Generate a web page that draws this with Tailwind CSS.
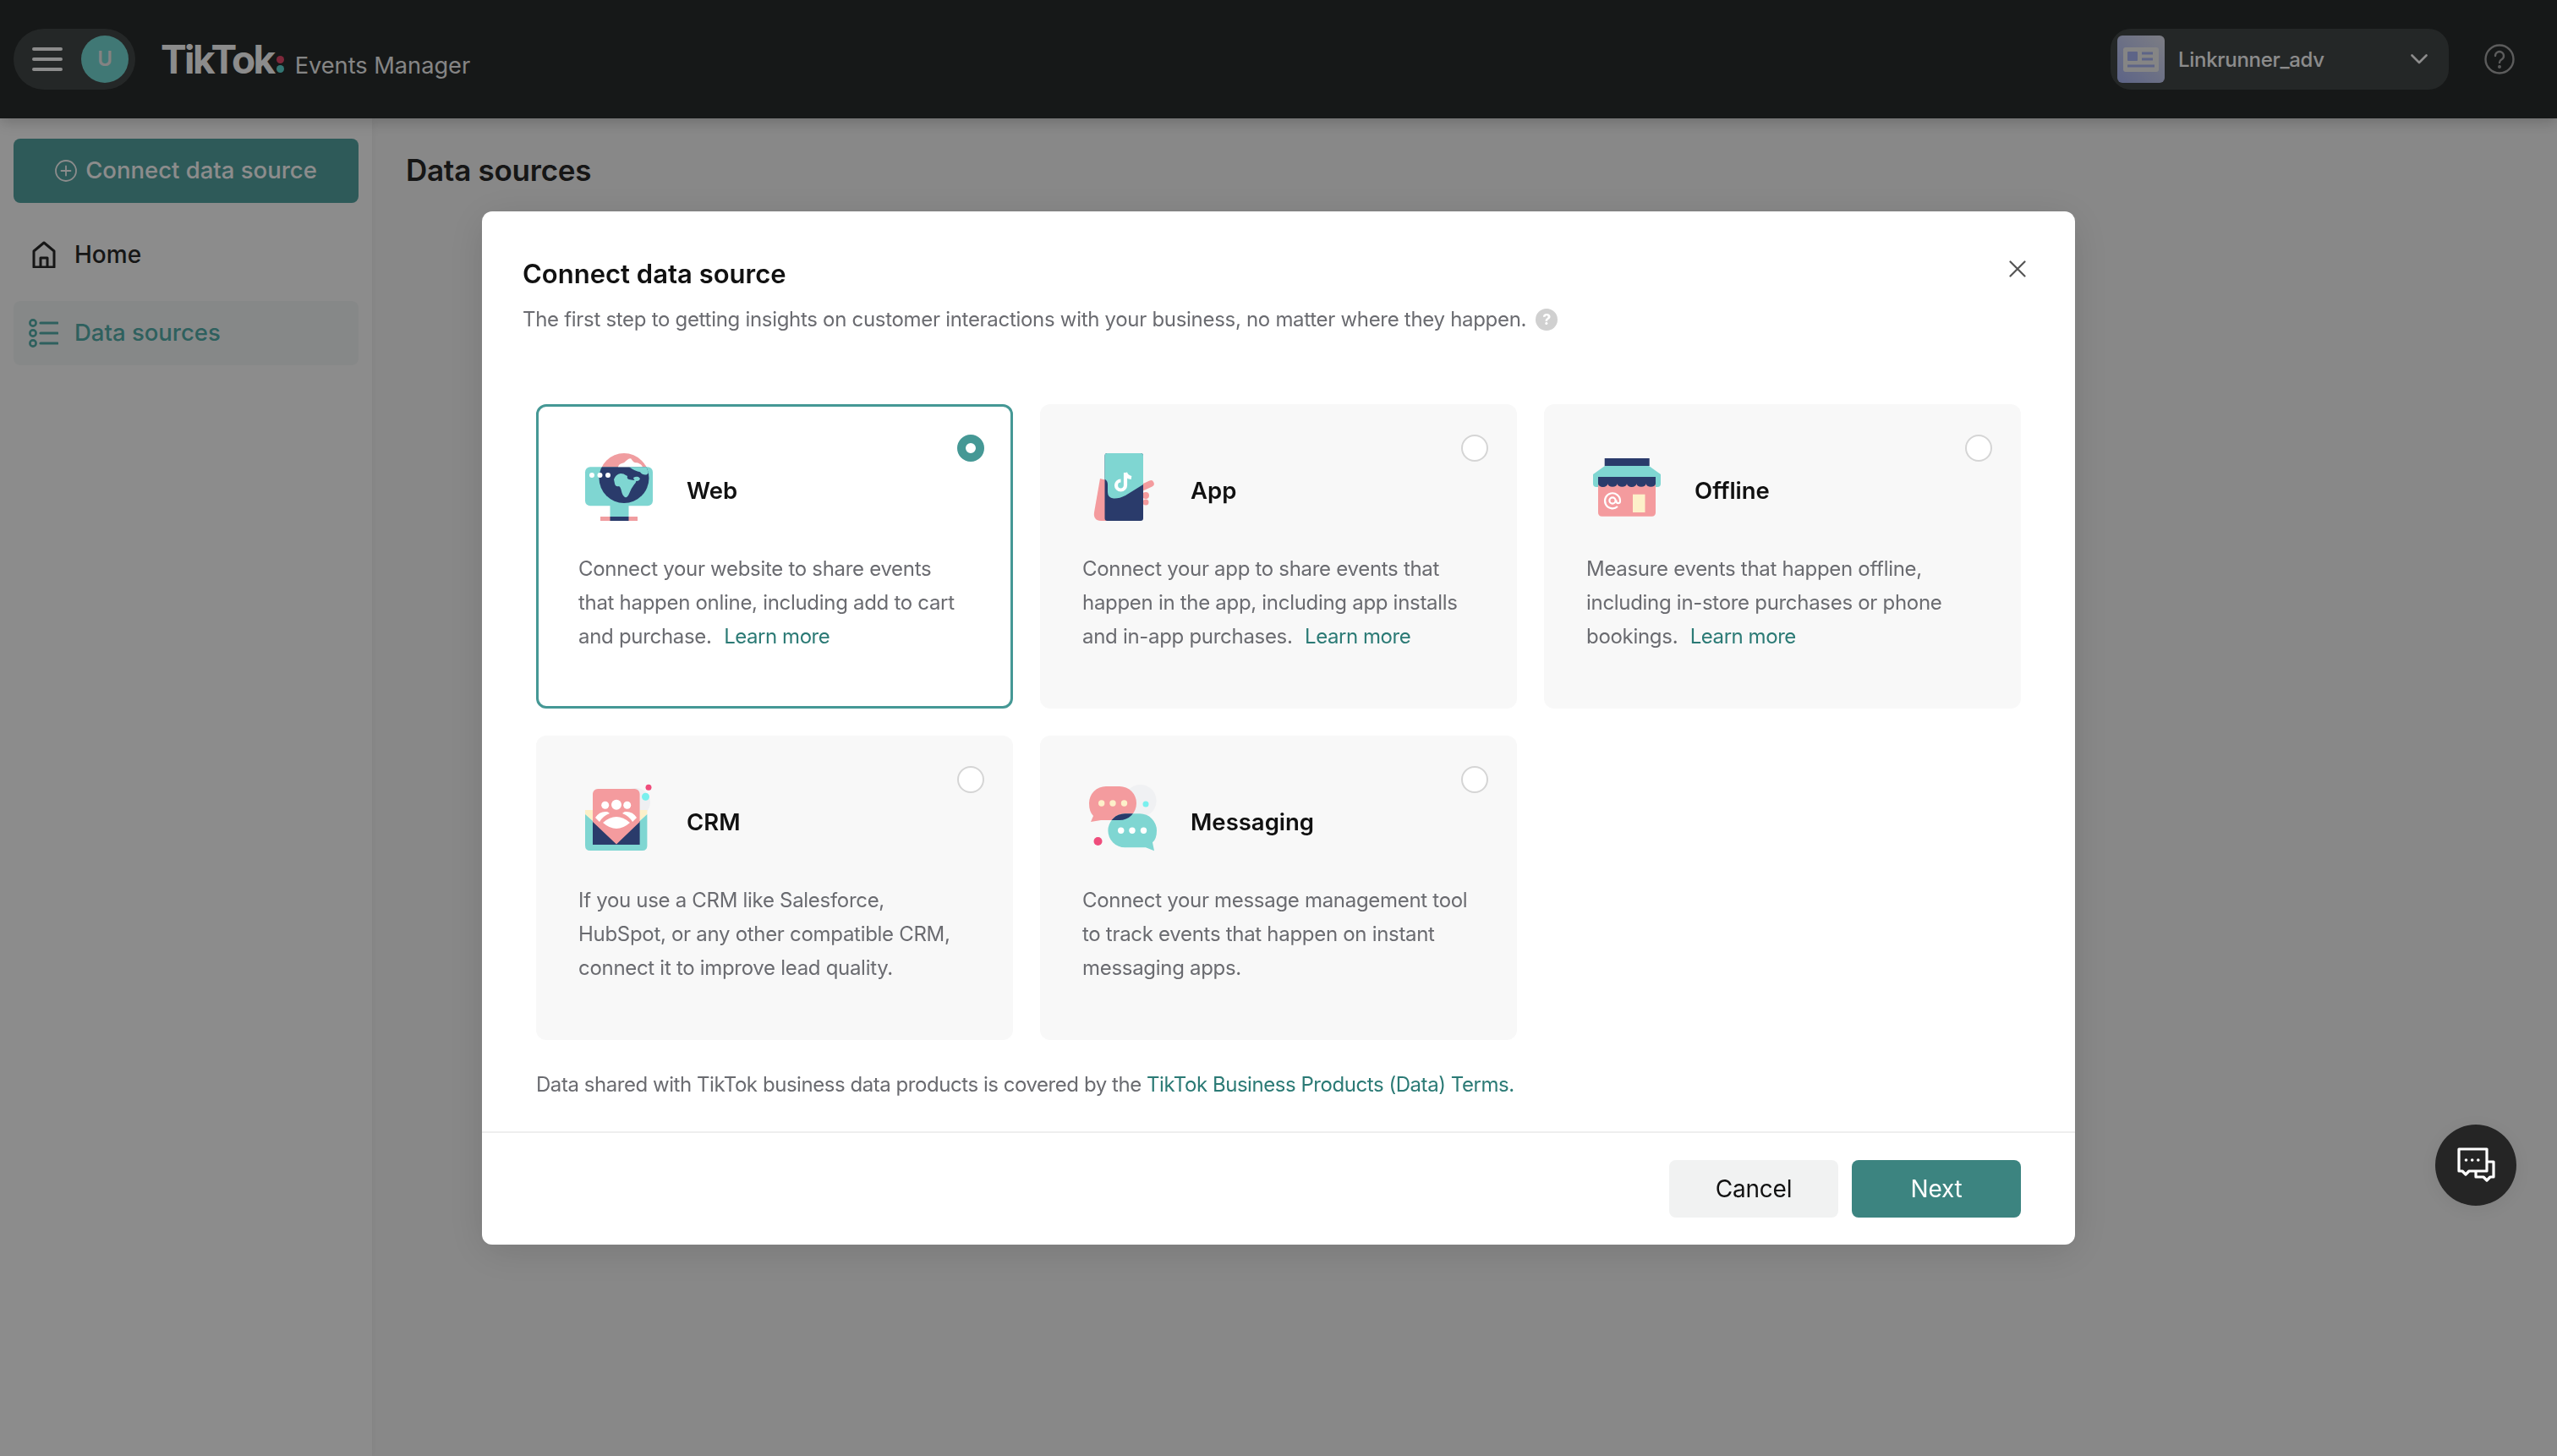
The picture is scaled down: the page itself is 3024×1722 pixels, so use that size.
<!DOCTYPE html>
<html lang="en">
<head>
<meta charset="utf-8">
<title>TikTok Events Manager</title>
<script src="https://cdn.jsdelivr.net/npm/@tailwindcss/browser@4"></script>
</head>
<body class="w-[3024px] h-[1722px] overflow-hidden bg-[#f8f8f8] font-['Inter','Liberation_Sans',sans-serif] text-[#282828]">

<!-- Top bar -->
<header class="relative z-10 h-[140px] bg-[#282c2c] flex items-center justify-between pl-4 pr-[50px] shadow-[0_4px_16px_rgba(0,0,0,0.2)]">
  <div class="flex items-center">
    <div class="w-[144px] h-[72px] rounded-[36px] bg-[#434747] flex items-center justify-between pl-[22px] pr-2">
      <svg class="w-9 h-8" viewBox="0 0 36 32" fill="none" stroke="#ffffff" stroke-width="4" stroke-linecap="round"><path d="M2 4h32M2 16h32M2 28h32"/></svg>
      <div class="w-14 h-14 rounded-full bg-[#76dad5] flex items-center justify-center text-[24px] font-semibold text-[#eeeeee]">U</div>
    </div>
    <div class="ml-[30px] flex items-baseline h-[72px] pt-[10px] text-white">
      <span class="text-[46px] font-bold tracking-[-2.6px] leading-[52px]">TikTok</span>
      <span class="relative w-[25px] self-stretch">
        <span class="absolute left-[3px] top-[22px] w-[9px] h-[9px] rounded-full bg-[#e8496a]"></span>
        <span class="absolute left-[3px] top-[33px] w-[9px] h-[9px] rounded-full bg-[#5ed8d2]"></span>
      </span>
      <span class="text-[27.2px] leading-[48px] text-[#f2f2f2]">Events Manager</span>
    </div>
  </div>
  <div class="flex items-center gap-[42px]">
    <div class="w-[400px] h-[72px] rounded-[24px] bg-[#434747] flex items-center pl-2 pr-[25px]">
      <svg class="w-14 h-14 rounded-[6px] shrink-0" viewBox="0 0 56 56">
        <defs><linearGradient id="acct" x1="0" y1="1" x2="1" y2="0"><stop offset="0" stop-color="#a9b6f6"/><stop offset="1" stop-color="#e2e4f0"/></linearGradient></defs>
        <rect width="56" height="56" fill="url(#acct)"/>
        <rect x="7" y="14" width="42" height="29" rx="3" fill="#f3f3f3"/>
        <rect x="12" y="19" width="12" height="11" rx="1" fill="#a9b6f6"/>
        <path d="M29 21h13M29 28h13" stroke="#a9b6f6" stroke-width="3"/>
        <path d="M12 36h32" stroke="#a9b6f6" stroke-width="3"/>
      </svg>
      <span class="ml-4 pt-[2px] text-[24px] tracking-[-0.3px] font-medium text-white flex-1">Linkrunner_adv</span>
      <svg class="w-5 h-3" viewBox="0 0 20 12" fill="none" stroke="#ffffff" stroke-width="2.6" stroke-linecap="round" stroke-linejoin="round"><path d="M1.5 1.5 10 10l8.5-8.5"/></svg>
    </div>
    <svg class="w-9 h-9" viewBox="0 0 36 36" fill="none" stroke="#a8a8a8" stroke-width="2.4" stroke-linecap="round"><circle cx="18" cy="18" r="16.5"/><path d="M13 14a5 5 0 1 1 7.6 4.3c-1.7 1-2.6 2-2.6 3.7"/><circle cx="18" cy="27" r="0.8" fill="#a8a8a8"/></svg>
  </div>
</header>

<div class="flex h-[1582px]">
  <!-- Sidebar -->
  <aside class="w-[440px] shrink-0 bg-white px-4 pt-6 flex flex-col shadow-[2px_0_8px_rgba(0,0,0,0.03)]">
    <button class="h-[76px] w-full rounded-[8px] bg-[#55a4a2] flex items-center justify-center gap-[10px] text-[27.5px] font-medium text-white">
      <svg class="w-[26px] h-[26px]" viewBox="0 0 26 26" fill="none" stroke="#ffffff" stroke-width="1.8" stroke-linecap="round"><circle cx="13" cy="13" r="12"/><path d="M13 7.5v11M7.5 13h11"/></svg>
      Connect data source
    </button>
    <div class="mt-[23px] h-[76px] flex items-center pl-[22px] gap-[22px] text-[28px] font-medium text-[#282828]">
      <svg class="w-7 h-8" viewBox="0 0 28 32" fill="none" stroke="#282828" stroke-width="3" stroke-linejoin="round"><path d="M2 31V12L14 2l12 10v19z"/><path d="M10 31V20h8v11"/></svg>
      Home
    </div>
    <div class="mt-[17px] h-[76px] rounded-[8px] bg-[#f5f8f8] flex items-center pl-[18px] gap-[19px] text-[27.5px] font-medium text-[#55b0ab]">
      <svg class="w-[35px] h-[34px]" viewBox="0 0 35 34" fill="none" stroke="#55b0ab" stroke-width="2.6"><circle cx="5" cy="5" r="3.6"/><circle cx="5" cy="17" r="3.6"/><circle cx="5" cy="29" r="3.6"/><path d="M14 5h20M14 17h20M14 29h20" stroke-width="3.2" stroke-linecap="round"/></svg>
      Data sources
    </div>
  </aside>
  <main class="flex-1 pl-10 pt-[41px]">
    <h1 class="text-[35px] leading-[40px] font-semibold tracking-[-0.25px] text-[#282828]">Data sources</h1>
  </main>
</div>

<!-- Modal layer -->
<div class="fixed inset-0 z-20 bg-black/45 flex items-start justify-center pt-[250px]">
  <div class="relative w-[1884px] h-[1222px] rounded-[12px] bg-white shadow-[0_8px_48px_rgba(0,0,0,0.12)] flex flex-col">
    <svg class="absolute right-[58px] top-[58px] w-5 h-5" viewBox="0 0 20 20" fill="none" stroke="#555555" stroke-width="2.2" stroke-linecap="round"><path d="M1.5 1.5l17 17M18.5 1.5l-17 17"/></svg>
    <div class="pl-12 pt-[54px]">
      <h2 class="text-[31px] leading-[40px] font-semibold text-[#111111]">Connect data source</h2>
      <p class="mt-[14px] flex items-center text-[24px] tracking-[-0.3px] leading-[40px] text-[#6a6b70]">
        The first step to getting insights on customer interactions with your business, no matter where they happen.
        <span class="ml-[11px] w-[26px] h-[26px] rounded-full bg-[#d0d0d0] text-white text-[18px] font-bold leading-[26px] text-center">?</span>
      </p>
    </div>

    <div class="mx-16 mt-20 grid grid-cols-3 gap-8 text-[24px] tracking-[-0.3px] leading-[40px] text-[#6a6b70]">
      <!-- Web -->
      <div class="relative h-[360px] rounded-[12px] border-[3px] border-[#459895] bg-white pl-[47px] pt-[51px]">
        <span class="absolute right-[31px] top-[33px] w-8 h-8 rounded-full border-[10px] border-[#459895] bg-white"></span>
        <div class="flex items-center gap-10 h-[88px]">
          <svg class="w-[88px] h-[88px]" viewBox="0 0 88 88">
            <defs><clipPath id="globe"><circle cx="54" cy="33.5" r="29.5"/></clipPath></defs>
            <rect x="8" y="20.3" width="80" height="46" rx="6" fill="#7fd6d2"/>
            <rect x="37.5" y="66" width="22" height="13" fill="#7fd6d2"/>
            <rect x="26" y="79" width="44" height="5" fill="#f09da0"/>
            <rect x="37.5" y="79" width="22" height="5" fill="#2a3b6b"/>
            <g clip-path="url(#globe)">
              <rect x="20" y="0" width="70" height="20.3" fill="#f09da0"/>
              <rect x="20" y="20.3" width="70" height="50" fill="#2a3b6b"/>
              <path d="M47 20.300c1-4 4-4 7-5 3-3 5-5 8-5 2 2 3 5 6 5 3 0 7 2 8 5z" fill="#ffffff"/>
              <path d="M60 20.300H82l2 6-3 3q-5 1-8-3-6-1-13-6z" fill="#7fd6d2"/>
              <path d="M42 35q2-6 8-7 4 0 6 2l2 1q-1 3 2 4 4 1 8 1 1 2-2 5-4 5-6 11-2 5-5 4-3-2-4-7-1-5-3-6-4 1-5-3z" fill="#7fd6d2"/>
              <path d="M65 33q3-2 6-1l2 2q-1 3-4 3-3 0-4-4z" fill="#7fd6d2"/>
            </g>
            <circle cx="16" cy="30" r="3" fill="#fff"/><circle cx="25.500" cy="30" r="3" fill="#fff"/><circle cx="35" cy="30" r="3" fill="#fff"/>
          </svg>
          <h3 class="pt-[8px] text-[27.5px] tracking-normal font-semibold text-[#111111]">Web</h3>
        </div>
        <p class="mt-[33px] w-[460px]">Connect your website to share events that happen online, including add to cart and purchase. <a class="ml-[8px] tracking-[-0.45px] text-[#2b7a75]">Learn more</a></p>
      </div>
      <!-- App -->
      <div class="relative h-[360px] rounded-[12px] bg-[#f8f8f8] pl-[50px] pt-[54px]">
        <span class="absolute right-[34px] top-[36px] w-8 h-8 rounded-full border-2 border-[#d5d5d5] bg-white"></span>
        <div class="flex items-center gap-10 h-[88px]">
          <svg class="w-[88px] h-[88px]" viewBox="0 0 88 88">
            <path d="M21 34l8 2v48h-7c-6 0-9-4-8-10z" fill="#f49b9e"/>
            <path d="M68 46l13-6" fill="none" stroke="#f49b9e" stroke-width="7.500" stroke-linecap="round"/>
            <circle cx="75" cy="54" r="4" fill="#f49b9e"/><circle cx="75" cy="62" r="3.500" fill="#f49b9e"/>
            <rect x="26.500" y="4" width="45.500" height="80" rx="3" fill="#2a3b6b"/>
            <path d="M26.500 7a3 3 0 0 1 3-3H69a3 3 0 0 1 3 3v34L51 54q-8 4-14 3.500-7-.500-7-7.500V41q0-4.500-3.500-6.300z" fill="#7fd6d2"/>
            <path d="M51 27v15a5.500 5.500 0 1 1-5.500-5.500M51 27q1 5 7 6" fill="none" stroke="#ffffff" stroke-width="4.200"/>
          </svg>
          <h3 class="pt-[8px] text-[27.5px] tracking-normal font-semibold text-[#111111]">App</h3>
        </div>
        <p class="mt-[33px] w-[460px]">Connect your app to share events that happen in the app, including app installs and in-app purchases. <a class="ml-[8px] tracking-[-0.45px] text-[#2b7a75]">Learn more</a></p>
      </div>
      <!-- Offline -->
      <div class="relative h-[360px] rounded-[12px] bg-[#f8f8f8] pl-[50px] pt-[54px]">
        <span class="absolute right-[34px] top-[36px] w-8 h-8 rounded-full border-2 border-[#d5d5d5] bg-white"></span>
        <div class="flex items-center gap-10 h-[88px]">
          <svg class="w-[88px] h-[88px]" viewBox="0 0 88 88">
            <rect x="21.700" y="10" width="53" height="9" fill="#2a3b6b"/>
            <path d="M22 19h52l14 10v11q0 4-4 4H12q-4 0-4-4V29z" fill="#7fd6d2"/>
            <path d="M14 38h68v36q0 4.700-4.700 4.700H18.700Q14 78.700 14 74z" fill="#f49b9e"/>
            <path d="M14 32h68v8a5.670 4 0 0 1-11.330 0 5.670 4 0 0 1-11.330 0 5.670 4 0 0 1-11.340 0 5.670 4 0 0 1-11.330 0 5.670 4 0 0 1-11.330 0 5.670 4 0 0 1-11.340 0z" fill="#2a3b6b"/>
            <rect x="55" y="52.700" width="14.500" height="21.300" fill="#fdf0c9"/>
            <path d="M37 67a9 9 0 1 1 3-6.500c0 3.500-4.500 3.500-4.500 0v-1" fill="none" stroke="#ffffff" stroke-width="2.200"/>
            <circle cx="31" cy="60" r="3.600" fill="none" stroke="#ffffff" stroke-width="2.200"/>
          </svg>
          <h3 class="pt-[8px] text-[27.5px] tracking-normal font-semibold text-[#111111]">Offline</h3>
        </div>
        <p class="mt-[33px] w-[460px]">Measure events that happen offline, including in-store purchases or phone bookings. <a class="ml-[8px] tracking-[-0.45px] text-[#2b7a75]">Learn more</a></p>
      </div>
      <!-- CRM -->
      <div class="relative h-[360px] rounded-[12px] bg-[#f8f8f8] pl-[50px] pt-[54px]">
        <span class="absolute right-[34px] top-[36px] w-8 h-8 rounded-full border-2 border-[#d5d5d5] bg-white"></span>
        <div class="flex items-center gap-10 h-[88px]">
          <svg class="w-[88px] h-[88px]" viewBox="0 0 88 88">
            <circle cx="68" cy="25" r="17" fill="#efeff2"/>
            <path d="M8 34h9v13l-9-8zM81.400 34h-8.800v13l8.800-8z" fill="#fdf0c9"/>
            <path d="M8 39l9 8h55.600l8.800-8v37q0 6-6 6H14q-6 0-6-6z" fill="#7fd6d2"/>
            <rect x="17" y="47" width="55.600" height="28" fill="#2a3b6b"/>
            <path d="M17 15a6 6 0 0 1 6-6h43.600a6 6 0 0 1 6 6v33L45 74.500 17 48z" fill="#f49b9e"/>
            <circle cx="31.700" cy="28.300" r="4.500" fill="#fff"/><circle cx="45" cy="27.700" r="6" fill="#fff"/><circle cx="57.700" cy="28.300" r="4.500" fill="#fff"/>
            <path d="M29 49q16-14 32 0-16 14-32 0z" fill="#fff"/>
            <path d="M20 43q5-8 14-7 2 1 3 2-8 3-12 10zM69 43q-5-8-14-7-2 1-3 2 8 3 12 10z" fill="#fff"/>
            <circle cx="79.500" cy="18.300" r="4.500" fill="#79f0ee"/><circle cx="83" cy="7.300" r="3.500" fill="#ef4d7c"/>
          </svg>
          <h3 class="pt-[8px] text-[27.5px] tracking-normal font-semibold text-[#111111]">CRM</h3>
        </div>
        <p class="mt-[33px] w-[460px]">If you use a CRM like Salesforce, HubSpot, or any other compatible CRM, connect it to improve lead quality.</p>
      </div>
      <!-- Messaging -->
      <div class="relative h-[360px] rounded-[12px] bg-[#f8f8f8] pl-[50px] pt-[54px]">
        <span class="absolute right-[34px] top-[36px] w-8 h-8 rounded-full border-2 border-[#d5d5d5] bg-white"></span>
        <div class="flex items-center gap-10 h-[88px]">
          <svg class="w-[88px] h-[88px]" viewBox="0 0 88 88">
            <defs><clipPath id="pinkb"><path d="M28 6h16a20 20 0 0 1 0 40H22l-12 2 3-7q-5-5-5-15A20 20 0 0 1 28 6z"/></clipPath></defs>
            <circle cx="68.600" cy="23" r="19" fill="#f0f1f3"/>
            <path d="M28 6h16a20 20 0 0 1 0 40H22l-12 2 3-7q-5-5-5-15A20 20 0 0 1 28 6z" fill="#f49b9e"/>
            <path d="M50.400 38.300H68a20 20 0 0 1 20 20q0 10-5 14l2 10-10-4H50.400a20 20 0 0 1 0-40z" fill="#7fd6d2"/>
            <path d="M50.400 38.300H68a20 20 0 0 1 0 40H50.400a20 20 0 0 1 0-40z" fill="#2a3b6b" clip-path="url(#pinkb)"/>
            <circle cx="22.700" cy="26" r="3.700" fill="#fdf0c9"/><circle cx="36" cy="26" r="3.700" fill="#fdf0c9"/><circle cx="49.500" cy="26" r="3.700" fill="#fdf0c9"/>
            <circle cx="45.700" cy="58.300" r="3.700" fill="#fff"/><circle cx="59" cy="58.300" r="3.700" fill="#fff"/><circle cx="72.500" cy="58.300" r="3.700" fill="#fff"/>
            <circle cx="75" cy="27" r="3.500" fill="#79f0ee"/><circle cx="18.500" cy="71" r="5" fill="#ef4d7c"/>
          </svg>
          <h3 class="pt-[8px] text-[27.5px] tracking-normal font-semibold text-[#111111]">Messaging</h3>
        </div>
        <p class="mt-[33px] w-[460px]">Connect your message management tool to track events that happen on instant messaging apps.</p>
      </div>
    </div>

    <p class="mx-16 mt-[33px] text-[24px] tracking-[-0.45px] leading-[40px] text-[#6a6b70]">Data shared with TikTok business data products is covered by the <a class="text-[#2b7a75]">TikTok Business Products (Data) Terms.</a></p>

    <div class="mt-[35px] border-t-2 border-[#eeeeee] flex justify-end gap-4 px-16 pt-[32px]">
      <button class="w-[200px] h-[68px] rounded-[8px] bg-[#f1f2f2] text-[28px] tracking-[-0.2px] text-[#111111]">Cancel</button>
      <button class="w-[200px] h-[68px] rounded-[8px] bg-[#3c8480] text-[28px] tracking-[-0.2px] text-white">Next</button>
    </div>
  </div>
</div>

<!-- Chat button -->
<button class="fixed z-30 left-[2880px] top-[1330px] w-24 h-24 rounded-full bg-[#252525] shadow-[0_4px_24px_rgba(0,0,0,0.08)]">
  <svg class="w-24 h-24" viewBox="0 0 96 96" fill="none" stroke="#ffffff" stroke-width="3.200" stroke-linejoin="round">
    <path d="M28 29h33v26H40l-4 4-4-4h-4z"/>
    <path d="M61 44h8v18h-4l-4 4-4-4h-9v-7"/>
    <circle cx="36.500" cy="42" r="1.800" fill="#fff" stroke="none"/><circle cx="43.700" cy="42" r="1.800" fill="#fff" stroke="none"/><circle cx="50.800" cy="42" r="1.800" fill="#fff" stroke="none"/>
  </svg>
</button>
</body>
</html>
